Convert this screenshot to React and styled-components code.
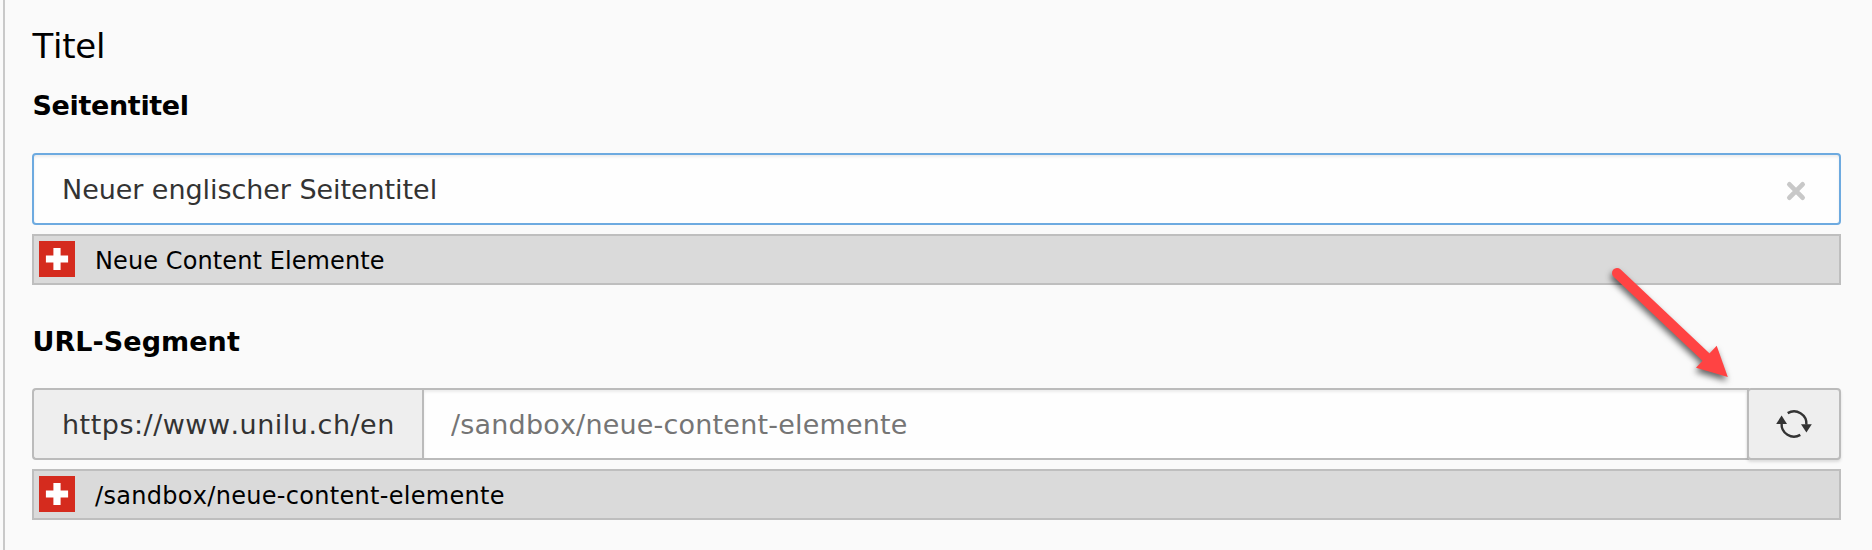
import React, { useState } from "react";
import styled, { createGlobalStyle } from "styled-components";

function App() {
  const [title, setTitle] = useState("Neuer englischer Seitentitel");
  const [slug, setSlug] = useState("");

  return (
    <Page>
      <GlobalStyle />
      <Heading>Titel</Heading>

      <Label $spacing="-0.35px">Seitentitel</Label>
      <Group>
        <TitleInput value={title} onChange={(e) => setTitle(e.target.value)} />
        <ClearButton onClick={() => setTitle("")}>
          <CloseIcon />
        </ClearButton>
      </Group>
      <Original>
        <Flag />
        <OriginalText $spacing="0.1px">Neue Content Elemente</OriginalText>
      </Original>

      <Label $spacing="0.05px" $second>URL-Segment</Label>
      <Group>
        <Addon>https://www.unilu.ch/en</Addon>
        <SlugInput
          placeholder="/sandbox/neue-content-elemente"
          value={slug}
          onChange={(e) => setSlug(e.target.value)}
        />
        <RefreshButton>
          <RefreshIcon />
        </RefreshButton>
      </Group>
      <Original>
        <Flag />
        <OriginalText $spacing="0.3px">/sandbox/neue-content-elemente</OriginalText>
      </Original>

      <Arrow />
    </Page>
  );
}

// Swiss flag
function Flag() {
  return (
    <svg width="36" height="36" viewBox="0 0 36 36">
      <rect width="36" height="36" fill="#d52b1e" />
      <path d="M14.4 6.9h7.2v7.5h7.5v7.2h-7.5v7.5h-7.2v-7.5H6.9v-7.2h7.5z" fill="#fff" />
    </svg>
  );
}

function CloseIcon() {
  return (
    <svg width="20" height="20" viewBox="0 0 20 20">
      <path d="M3.4 3.4l13.2 13.2M16.6 3.4L3.4 16.6" stroke="#c8c8c8" strokeWidth="4.8" strokeLinecap="round" />
    </svg>
  );
}

function RefreshIcon() {
  return (
    <svg width="36" height="36" viewBox="0 0 36 36">
      <g fill="none" stroke="#333" strokeWidth="2.4">
        <path d="M11.7 7.1A12.4 12.4 0 0 1 30.4 18.6" />
        <path d="M24.3 28.9A12.4 12.4 0 0 1 5.6 17.4" />
      </g>
      <path d="M25 18.2h10.8l-5.4 8.4z" fill="#333" />
      <path d="M0.2 17.9H11L5.6 9.4z" fill="#333" />
    </svg>
  );
}

// red arrow pointing at the refresh button
function Arrow() {
  return (
    <ArrowSvg width="150" height="140" viewBox="0 0 150 140">
      <path d="M17 23L107 108" stroke="#ff4343" strokeWidth="10" strokeLinecap="round" />
      <path d="M116.7 95.7L127.8 127L96 117.7z" fill="#ff4343" />
    </ArrowSvg>
  );
}

const GlobalStyle = createGlobalStyle`
  * {
    box-sizing: border-box;
  }
  body {
    margin: 0;
    background: #fafafa;
    font-family: Verdana, "DejaVu Sans", sans-serif;
    font-kerning: none;
  }
  input, button {
    font-family: inherit;
    font-kerning: none;
    margin: 0;
    outline: none;
  }
`;

const Page = styled.div`
  position: relative;
  height: 550px;
  margin-left: 3px;
  padding: 24px 31px 0 27px;
  border-left: 2px solid #c9c9c9;
  overflow: hidden;
`;

const Heading = styled.h2`
  margin: 0;
  padding-left: 0.5px;
  font-size: 34px;
  font-weight: normal;
  line-height: 44px;
  letter-spacing: -0.25px;
`;

const Label = styled.label`
  display: block;
  height: 32px;
  margin-top: ${(props) => (props.$second ? "41px" : "22px")};
  margin-bottom: ${(props) => (props.$second ? "30px" : "31px")};
  padding-left: 0.5px;
  font-size: 27px;
  font-weight: bold;
  line-height: 32px;
  letter-spacing: ${(props) => props.$spacing};
`;

const Group = styled.div`
  display: flex;
  height: 72px;
  margin-bottom: 9px;
`;

const Field = styled.input`
  flex: 1;
  min-width: 0;
  height: 72px;
  border: 2px solid #bbb;
  background: #fefefe;
  color: #333;
  font-size: 27px;
  box-shadow: inset 0 2px 3px rgba(0, 0, 0, 0.075);
`;

const TitleInput = styled(Field)`
  padding: 0 80px 0 28px;
  border-color: #6daae0;
  border-radius: 4px;
  letter-spacing: -0.06px;
`;

const SlugInput = styled(Field)`
  padding: 0 27px;
  letter-spacing: 0.19px;
  &::placeholder {
    color: #757575;
    opacity: 1;
  }
`;

const ClearButton = styled.button`
  display: flex;
  align-items: center;
  justify-content: center;
  width: 40px;
  margin-left: -65px;
  margin-right: 25px;
  padding: 4px 0 0;
  border: 0;
  background: none;
`;

const Addon = styled.span`
  width: 390px;
  padding-left: 28px;
  border: 2px solid #bbb;
  border-right: 0;
  border-radius: 4px 0 0 4px;
  background: #eee;
  color: #333;
  font-size: 27px;
  line-height: 70px;
  letter-spacing: 0.5px;
  white-space: nowrap;
`;

const RefreshButton = styled.button`
  display: flex;
  align-items: center;
  justify-content: center;
  width: 94px;
  margin-left: -2px;
  padding: 0;
  border: 2px solid #bbb;
  border-radius: 4px;
  background: #eee;
  box-shadow: 0 2px 3px rgba(0, 0, 0, 0.12);
`;

// value of the original language below the field
const Original = styled.div`
  display: flex;
  align-items: flex-start;
  height: 51px;
  padding: 5px 0 0 5px;
  border: 2px solid #bebebe;
  background: #dadada;
`;

const OriginalText = styled.span`
  margin-left: 20px;
  font-size: 24px;
  line-height: 40px;
  letter-spacing: ${(props) => props.$spacing};
`;

const ArrowSvg = styled.svg`
  position: absolute;
  left: 1595px;
  top: 250px;
  filter: drop-shadow(-1px 4px 3px rgba(0, 0, 0, 0.6));
  pointer-events: none;
`;

export default App;
